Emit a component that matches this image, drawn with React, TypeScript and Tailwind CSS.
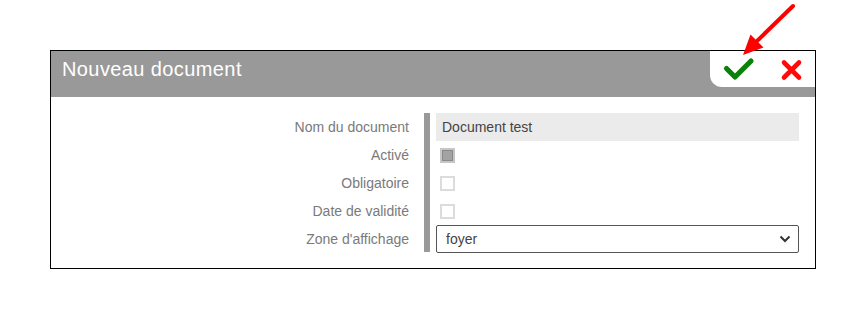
import React from 'react';

const labels = ['Nom du document', 'Activé', 'Obligatoire', 'Date de validité', "Zone d'affichage"];

const Box = ({ checked }: { checked?: boolean }) =>
  checked ? (
    <div className="ml-[4px] w-[15px] h-[15px] border-2 border-[#c6c6c6] bg-[#8a8a8a] p-[1px]">
      <div className="w-full h-full bg-[#a3a3a3]" />
    </div>
  ) : (
    <div className="ml-[4px] w-[15px] h-[15px] border-2 border-[#dcdcdc] bg-white" />
  );

const App = () => {
  return (
    <div className="relative h-[320px] w-[866px] bg-white pt-[50px] pl-[50px]" style={{ fontFamily: '"Liberation Sans", Arial, sans-serif' }}>
      <div className="w-[766px] border border-black">
        <div className="bg-[#999999] h-[46px] flex items-start">
          <div className="flex-1 h-[36px] flex items-center pl-[11px] text-white text-[20px] tracking-[0.4px]">Nouveau document</div>
          <div className="w-[105px] h-[36px] bg-white rounded-bl-[12px] relative">
            <svg width="105" height="36" viewBox="0 0 105 36" className="absolute left-0 top-0">
              <path d="M16.5 17.5 L25 26 L41 10" fill="none" stroke="#0a820a" strokeWidth="5.2" strokeLinecap="round" strokeLinejoin="round" />
              <path d="M74 11.5 L89 26.5 M89 11.5 L74 26.5" fill="none" stroke="#ff0a0a" strokeWidth="4.6" strokeLinecap="round" />
            </svg>
          </div>
        </div>
        <div className="flex pt-[16px] pb-[15px]">
          <div className="w-[358px] flex flex-col text-[14px] text-[#7a7a7a]">
            {labels.map((l) => (
              <div key={l} className="h-[28px] flex items-center justify-end">{l}</div>
            ))}
          </div>
          <div className="w-[6px] ml-[15px] mr-[6px] bg-[#999999] h-[139px]" />
          <div className="w-[363px] flex flex-col text-[14px] text-[#444]">
            <div className="h-[28px] bg-[#ebebeb] flex items-center px-[6px]">Document test</div>
            <div className="h-[28px] flex items-center"><Box checked /></div>
            <div className="h-[28px] flex items-center"><Box /></div>
            <div className="h-[28px] flex items-center"><Box /></div>
            <div className="h-[28px] border border-[#555] rounded-[2px] flex items-center justify-between pl-[9px] pr-[7px]">
              <span>foyer</span>
              <svg width="12" height="8" viewBox="0 0 12 8">
                <path d="M1.5 1.5 L6 6 L10.5 1.5" fill="none" stroke="#333" strokeWidth="2" />
              </svg>
            </div>
          </div>
        </div>
      </div>
      <svg width="866" height="320" className="absolute left-0 top-0 pointer-events-none">
        <line x1="793" y1="6" x2="756" y2="42" stroke="#ff0000" strokeWidth="4" strokeLinecap="round" />
        <polygon points="743,55 750.5,34.5 763.5,47.5" fill="#ff0000" />
      </svg>
    </div>
  );
};

export default App;
